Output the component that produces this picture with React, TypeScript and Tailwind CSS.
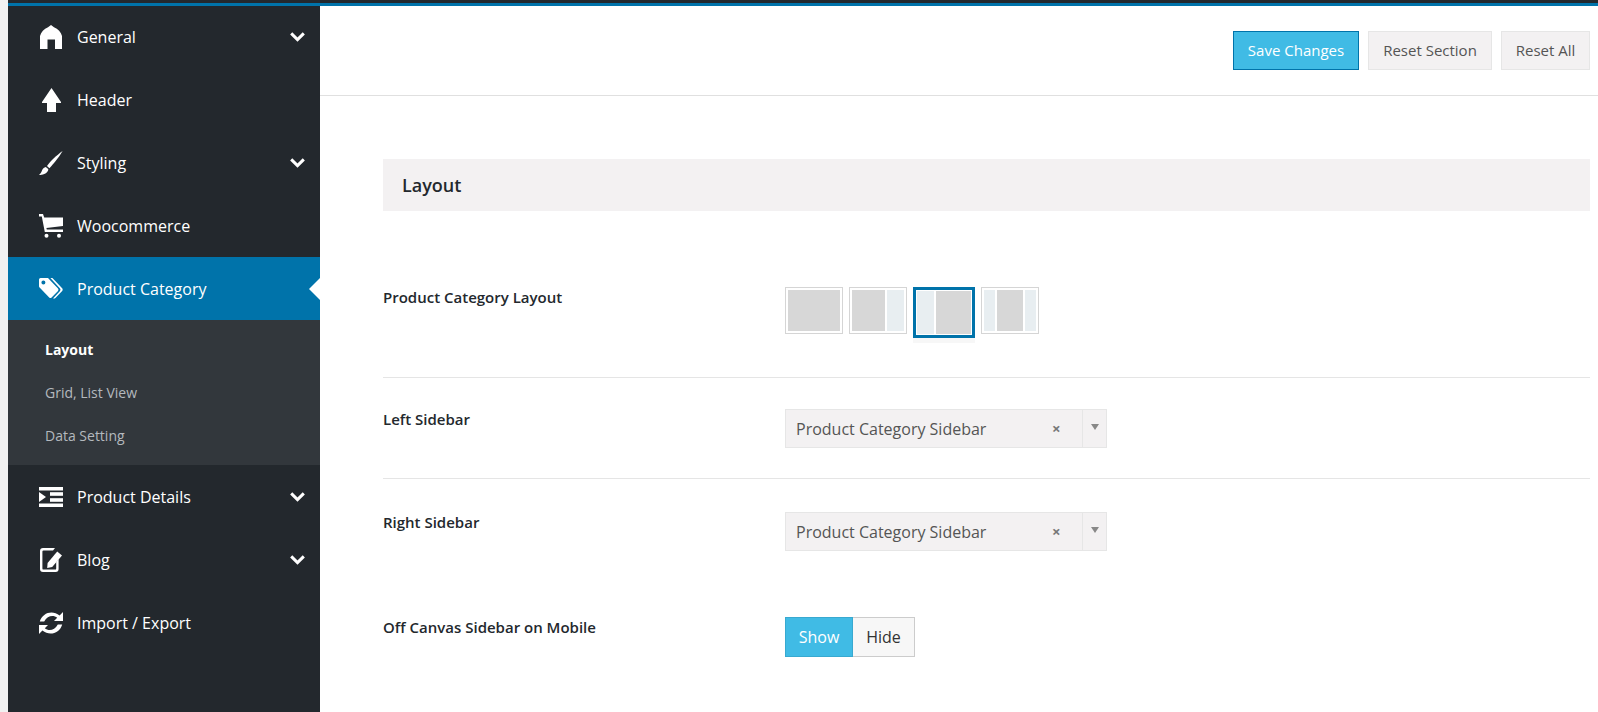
import type { ReactNode } from 'react';

const Home = () => (
  <svg width="22" height="24" viewBox="0 0 22 24" fill="#fff">
    <path d="M11 0 L14 2.2 C18 4 21 7 22 11 V24 H15 V14.5 H7.5 V24 H0 V11 C1 7 4 4 8 2.2 Z" />
  </svg>
);

const ArrowUp = () => (
  <svg width="19" height="24" viewBox="0 0 19 24" fill="#fff">
    <path d="M9.5 0 L19 14 V15 H14 V24 H5 V15 H0 V14 Z" />
  </svg>
);

const Brush = () => (
  <svg width="24" height="24" viewBox="0 0 24 24" fill="#fff">
    <path d="M23.6 0 C18 4 11 10.5 8 15 L10.4 17.2 C14.5 13 20 6 23.6 0 Z" />
    <path d="M6.8 16 C4 16.5 3.4 18.5 2.6 20.5 C2 22 1 23 0 24 C3.5 24 7.5 23 9 19.8 C9.4 18.8 9.3 18.2 9.2 18 Z" />
  </svg>
);

const Cart = () => (
  <svg width="24" height="24" viewBox="0 0 24 24" fill="#fff">
    <path d="M0 0 H4 L5.2 3.5 H24 V12 L7.4 14 L7.8 15.5 H24 V18 H5.8 L2.8 2.4 H0 Z" />
    <circle cx="7.5" cy="21.8" r="2" />
    <circle cx="20" cy="21.8" r="2" />
  </svg>
);

const Tags = () => (
  <svg width="24" height="21" viewBox="0 0 24 21" fill="#fff">
    <path fillRule="evenodd" d="M1.6 0 H9 L19 10.5 Q20 11.8 19 13 L12.6 19.6 Q11.4 20.6 10.2 19.6 L0.6 9.6 Q0 9 0 8 V1.6 Q0 0 1.6 0 Z M4.4 2.4 A2 2 0 1 0 4.41 6.4 A2 2 0 1 0 4.4 2.4 Z" />
    <path d="M11.4 0 H13.4 L23.4 10.5 Q24 11.6 23.4 12.8 L16.4 20 Q15.4 20.8 14 20.4 L21 13 Q22 11.8 21 10.5 Z" />
  </svg>
);

const Indent = () => (
  <svg width="24" height="20" viewBox="0 0 24 20" fill="#fff">
    <rect x="0" y="0" width="24" height="3.5" />
    <rect x="0" y="16.5" width="24" height="3.5" />
    <path d="M0 5 L7 10 L0 15 Z" />
    <rect x="11" y="5.2" width="13" height="3.6" />
    <rect x="11" y="11.2" width="13" height="3.6" />
  </svg>
);

const Edit = () => (
  <svg width="22" height="24" viewBox="0 0 22 24" fill="#fff">
    <path d="M3 0 H15 L13 2.4 H3.6 Q2.4 2.4 2.4 3.6 V20.4 Q2.4 21.6 3.6 21.6 H15 Q16.2 21.6 16.2 20.4 V14 L18.6 11 V21 Q18.6 24 15.6 24 H3 Q0 24 0 21 V3 Q0 0 3 0 Z" />
    <path d="M17.2 3.6 L22 7.6 L12.2 19 L7.2 20 L7.6 15 Z" />
  </svg>
);

const Refresh = () => (
  <svg width="24" height="24" viewBox="0 0 24 24" fill="#fff">
    <path d="M24 1 V10 H15 L18.2 6.8 C14.6 3.8 8.4 4.4 5.2 10.6 H0.8 C3.4 1.6 13.4 -1.4 20.6 4.4 Z" />
    <path d="M0 23 V14 H9 L5.8 17.2 C9.4 20.2 15.6 19.6 18.8 13.4 H23.2 C20.6 22.4 10.6 25.4 3.4 19.6 Z" />
  </svg>
);

const Chevron = () => (
  <svg width="15" height="10" viewBox="0 0 15 10" fill="none" stroke="#fff" strokeWidth="3">
    <path d="M1.2 1.4 L7.5 7.6 L13.8 1.4" />
  </svg>
);

function MenuRow({ icon, label, chevron, height = 'h-[63px]' }: { icon: ReactNode; label: string; chevron?: boolean; height?: string }) {
  return (
    <div className={`${height} flex items-center text-white`}>
      <div className="ml-[31px] w-6 flex justify-center shrink-0">{icon}</div>
      <span className="ml-[14px] text-[16px] flex-1">{label}</span>
      {chevron && (
        <span className="mr-[15px] flex">
          <Chevron />
        </span>
      )}
    </div>
  );
}

function Sidebar() {
  return (
    <aside className="w-[312px] shrink-0 bg-[#23282d]">
      <MenuRow icon={<Home />} label="General" chevron height="h-[62px]" />
      <MenuRow icon={<ArrowUp />} label="Header" />
      <MenuRow icon={<Brush />} label="Styling" chevron />
      <MenuRow icon={<Cart />} label="Woocommerce" />
      <div className="relative h-[63px] bg-[#0073aa] flex items-center text-white">
        <div className="ml-[31px] w-6 flex justify-center shrink-0">
          <Tags />
        </div>
        <span className="ml-[14px] text-[16px]">Product Category</span>
        <div className="absolute right-0 top-[21px] w-0 h-0 border-y-[11px] border-y-transparent border-r-[11px] border-r-white" />
      </div>
      <div className="bg-[#32373c] py-[8px]">
        <div className="h-[43px] flex items-center pl-[37px] text-[14px] font-bold text-white">Layout</div>
        <div className="h-[43px] flex items-center pl-[37px] text-[14px] text-[#b4b9be]">Grid, List View</div>
        <div className="h-[43px] flex items-center pl-[37px] text-[14px] text-[#b4b9be]">Data Setting</div>
      </div>
      <MenuRow icon={<Indent />} label="Product Details" chevron />
      <MenuRow icon={<Edit />} label="Blog" chevron />
      <MenuRow icon={<Refresh />} label="Import / Export" />
    </aside>
  );
}

function LayoutThumb({ parts, selected }: { parts: string[]; selected?: boolean }) {
  return (
    <div
      className={
        selected
          ? 'w-[62px] h-[51px] border-[3px] border-[#0073aa] p-[1px] flex gap-[2px] bg-white shadow-[0_5px_0_#f7f7f7]'
          : 'w-[58px] h-[47px] border border-[#d5d5d5] p-[2px] flex gap-[2px] bg-white'
      }
    >
      {parts.map((part, i) => (
        <div key={i} className={part === 'side-a' ? 'w-[17px] bg-[#e8eef1]' : part === 'side-b' ? 'w-[17px] bg-[#e8eef1]' : part === 'side-c' ? 'w-[11px] bg-[#e8eef1]' : 'flex-1 bg-[#d7d7d7]'} />
      ))}
    </div>
  );
}

function SidebarSelect() {
  return (
    <div className="w-[322px] h-[39px] bg-[#f3f1f2] border border-[#e6e6e6] flex items-center text-[16px] text-[#555]">
      <span className="pl-[10px] flex-1">Product Category Sidebar</span>
      <span className="w-[30px] text-[15px] text-[#777] font-bold">×</span>
      <div className="w-[24px] h-full border-l border-[#e6e6e6] flex items-center justify-center">
        <div className="w-0 h-0 mb-[3px] border-x-[4px] border-x-transparent border-t-[6px] border-t-[#888]" />
      </div>
    </div>
  );
}

export default function App() {
  return (
    <div className="h-[712px] overflow-hidden flex bg-[#f1f1f1] font-['Open_Sans',sans-serif]">
      <div className="w-2 shrink-0" />
      <div className="flex-1 min-w-0 flex flex-col">
        <div className="h-[3px] bg-[#23282d]" />
        <div className="h-[3px] bg-[#0073aa]" />
        <div className="flex-1 flex min-h-0">
          <Sidebar />
          <main className="flex-1 min-w-0 bg-white">
            {/* Toolbar */}
            <div className="h-[90px] border-b border-[#e0e0e0] flex justify-end gap-[9px] pt-[25px] pr-[8px]">
              <button className="w-[126px] h-[39px] bg-[#40bbe5] border border-[#0073aa] text-white text-[15px]">Save Changes</button>
              <button className="w-[124px] h-[39px] bg-[#f3f1f2] border border-[#e6e6e6] text-[#555] text-[15px]">Reset Section</button>
              <button className="w-[89px] h-[39px] bg-[#f3f1f2] border border-[#e6e6e6] text-[#555] text-[15px]">Reset All</button>
            </div>

            <div className="pl-[63px] pr-[8px] pt-[63px]">
              <div className="h-[52px] bg-[#f3f1f2] flex items-center pl-[19px] text-[18px] font-semibold text-[#23282d]">Layout</div>

              <div className="h-[167px] border-b border-[#e5e5e5] flex pt-[76px]">
                <div className="w-[402px] text-[15px] font-semibold text-[#23282d] leading-5">Product Category Layout</div>
                <div className="flex items-start gap-[6px] -mt-[0px]">
                  <LayoutThumb parts={['main']} />
                  <LayoutThumb parts={['main', 'side-a']} />
                  <LayoutThumb selected parts={['side-b', 'main']} />
                  <LayoutThumb parts={['side-c', 'main', 'side-c']} />
                </div>
              </div>

              <div className="h-[101px] border-b border-[#e5e5e5] flex pt-[31px]">
                <div className="w-[402px] text-[15px] font-semibold text-[#23282d] leading-5">Left Sidebar</div>
                <SidebarSelect />
              </div>

              <div className="h-[104px] flex pt-[33px]">
                <div className="w-[402px] text-[15px] font-semibold text-[#23282d] leading-5">Right Sidebar</div>
                <SidebarSelect />
              </div>

              <div className="flex pt-[34px]">
                <div className="w-[402px] text-[15px] font-semibold text-[#23282d] leading-5 -mt-[8px] pt-[8px]">Off Canvas Sidebar on Mobile</div>
                <div className="flex h-[40px] text-[16px]">
                  <div className="w-[68px] bg-[#40bbe5] border border-[#38a9d0] text-white flex items-center justify-center">Show</div>
                  <div className="w-[62px] bg-[#f7f7f7] border border-l-0 border-[#cccccc] text-[#333] flex items-center justify-center">Hide</div>
                </div>
              </div>
            </div>
          </main>
        </div>
      </div>
    </div>
  );
}
